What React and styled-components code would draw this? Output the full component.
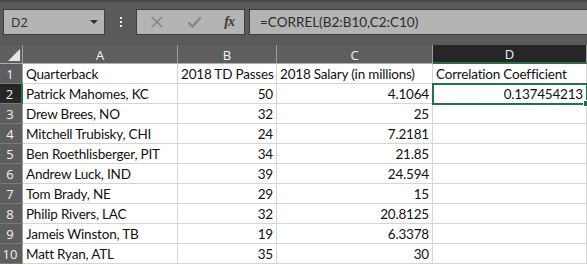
import React from "react";
import styled, { createGlobalStyle } from "styled-components";

const Global = createGlobalStyle`
  html, body { margin: 0; padding: 0; background: #ffffff; }
  body { font-family: "Lato", "Liberation Sans", sans-serif; }
`;

const Page = styled.div`
  width: 587px;
  height: 265px;
  overflow: hidden;
  background: #ffffff;
`;

const Toolbar = styled.div`
  height: 45px;
  box-sizing: border-box;
  background: #5a5a5a;
  border-top: 2px solid #474747;
  display: flex;
  align-items: flex-start;
  padding: 7px 0 0 3px;
`;

const NameBox = styled.div`
  width: 102px;
  height: 26px;
  box-sizing: border-box;
  background: #b4b4b4;
  border: 1px solid #3e3e3e;
  display: flex;
  align-items: center;
  justify-content: space-between;
  padding: 0 6px 0 7px;
  font-family: "Open Sans", "Liberation Sans", sans-serif;
  font-size: 13px;
  color: #2b2b2b;
`;

const Caret = styled.span`
  width: 0;
  height: 0;
  border-left: 4px solid transparent;
  border-right: 4px solid transparent;
  border-top: 4px solid #2e2e2e;
`;

const Grip = styled.div`
  width: 31px;
  height: 26px;
  display: flex;
  flex-direction: column;
  align-items: center;
  justify-content: center;
  gap: 2px;
  span {
    width: 2px;
    height: 2px;
    background: #f0f0f0;
  }
`;

const ButtonGroup = styled.div`
  width: 109px;
  height: 26px;
  box-sizing: border-box;
  background: #b4b4b4;
  border: 1px solid #3e3e3e;
  display: flex;
  align-items: center;
  justify-content: space-between;
  padding: 0 10px 0 13px;
`;

const Fx = styled.span`
  font-family: "Liberation Serif", serif;
  font-style: italic;
  font-weight: bold;
  font-size: 14px;
  color: #3a3a3a;
  letter-spacing: -1px;
`;

const Formula = styled.div`
  flex: 1;
  margin-left: 4px;
  height: 26px;
  box-sizing: border-box;
  background: #b4b4b4;
  border: 1px solid #3e3e3e;
  border-right: none;
  display: flex;
  align-items: center;
  padding-left: 10px;
  font-family: "Lato", "Liberation Sans", sans-serif;
  font-size: 13.5px;
  color: #2b2b2b;
`;

const Sheet = styled.div`
  display: grid;
  grid-template-columns: 23px 155px 99px 156px 154px;
  grid-template-rows: 19px;
  grid-auto-rows: 20px;
`;

const Corner = styled.div`
  background: #5e5e5e;
  border-right: 1px solid #9e9e9e;
  border-bottom: 1px solid #adadad;
  box-sizing: border-box;
  position: relative;
  &::after {
    content: "";
    position: absolute;
    right: 2px;
    bottom: 2px;
    width: 0;
    height: 0;
    border-left: 12px solid transparent;
    border-bottom: 12px solid #e6e6e6;
  }
`;

const ColHead = styled.div`
  background: ${(p) => (p.$active ? "#262626" : "#5e5e5e")};
  border-right: 1px solid #9e9e9e;
  border-bottom: ${(p) => (p.$active ? "2px solid #217346" : "1px solid #adadad")};
  box-sizing: border-box;
  color: #f4f4f4;
  font-family: "Open Sans", "Liberation Sans", sans-serif;
  font-size: 13px;
  display: flex;
  align-items: center;
  justify-content: center;
  padding-top: 1px;
`;

const RowHead = styled.div`
  background: ${(p) => (p.$active ? "#262626" : "#5e5e5e")};
  border-bottom: 1px solid #7a7a7a;
  border-right: ${(p) => (p.$active ? "2px solid #217346" : "1px solid #9e9e9e")};
  box-sizing: border-box;
  color: #f4f4f4;
  font-family: "Open Sans", "Liberation Sans", sans-serif;
  font-size: 13px;
  display: flex;
  align-items: center;
  justify-content: center;
  padding-right: 2px;
`;

const Cell = styled.div`
  box-sizing: border-box;
  border-right: 1px solid #d4d4d4;
  border-bottom: 1px solid #d4d4d4;
  font-family: "Lato", "Liberation Sans", sans-serif;
  font-size: 13.5px;
  letter-spacing: -0.2px;
  color: #111;
  display: flex;
  align-items: center;
  justify-content: ${(p) => (p.$num ? "flex-end" : "flex-start")};
  padding: 1px 3px 0 3px;
  white-space: nowrap;
  overflow: visible;
  position: relative;
`;

const Selected = styled(Cell)`
  outline: 2px solid #217346;
  outline-offset: -1px;
  z-index: 1;
  &::after {
    content: "";
    position: absolute;
    right: -4px;
    bottom: -4px;
    width: 5px;
    height: 5px;
    background: #217346;
    border: 1px solid #ffffff;
  }
`;

const rows = [
  ["Quarterback", "2018 TD Passes", "2018 Salary (in millions)", "Correlation Coefficient"],
  ["Patrick Mahomes, KC", "50", "4.1064", "0.137454213"],
  ["Drew Brees, NO", "32", "25", ""],
  ["Mitchell Trubisky, CHI", "24", "7.2181", ""],
  ["Ben Roethlisberger, PIT", "34", "21.85", ""],
  ["Andrew Luck, IND", "39", "24.594", ""],
  ["Tom Brady, NE", "29", "15", ""],
  ["Philip Rivers, LAC", "32", "20.8125", ""],
  ["Jameis Winston, TB", "19", "6.3378", ""],
  ["Matt Ryan, ATL", "35", "30", ""],
];

const Cross = () => (
  <svg width="14" height="14" viewBox="0 0 14 14">
    <path d="M2 2 L12 12 M12 2 L2 12" stroke="#858585" strokeWidth="1.6" fill="none" />
  </svg>
);

const Check = () => (
  <svg width="15" height="14" viewBox="0 0 15 14">
    <path d="M1.5 7.5 L5.5 11.5 L13.5 2.5" stroke="#858585" strokeWidth="2.4" fill="none" />
  </svg>
);

export default function App() {
  return (
    <Page>
      <Global />
      <Toolbar>
        <NameBox>
          D2
          <Caret />
        </NameBox>
        <Grip>
          <span />
          <span />
          <span />
        </Grip>
        <ButtonGroup>
          <Cross />
          <Check />
          <Fx>fx</Fx>
        </ButtonGroup>
        <Formula>=CORREL(B2:B10,C2:C10)</Formula>
      </Toolbar>
      <Sheet>
        <Corner />
        <ColHead>A</ColHead>
        <ColHead>B</ColHead>
        <ColHead>C</ColHead>
        <ColHead $active>D</ColHead>
        {rows.map((r, i) => (
          <React.Fragment key={i}>
            <RowHead $active={i === 1}>{i + 1}</RowHead>
            <Cell>{r[0]}</Cell>
            <Cell $num={i > 0}>{r[1]}</Cell>
            <Cell $num={i > 0}>{r[2]}</Cell>
            {i === 1 ? <Selected $num>{r[3]}</Selected> : <Cell $num={i > 0}>{r[3]}</Cell>}
          </React.Fragment>
        ))}
      </Sheet>
    </Page>
  );
}
